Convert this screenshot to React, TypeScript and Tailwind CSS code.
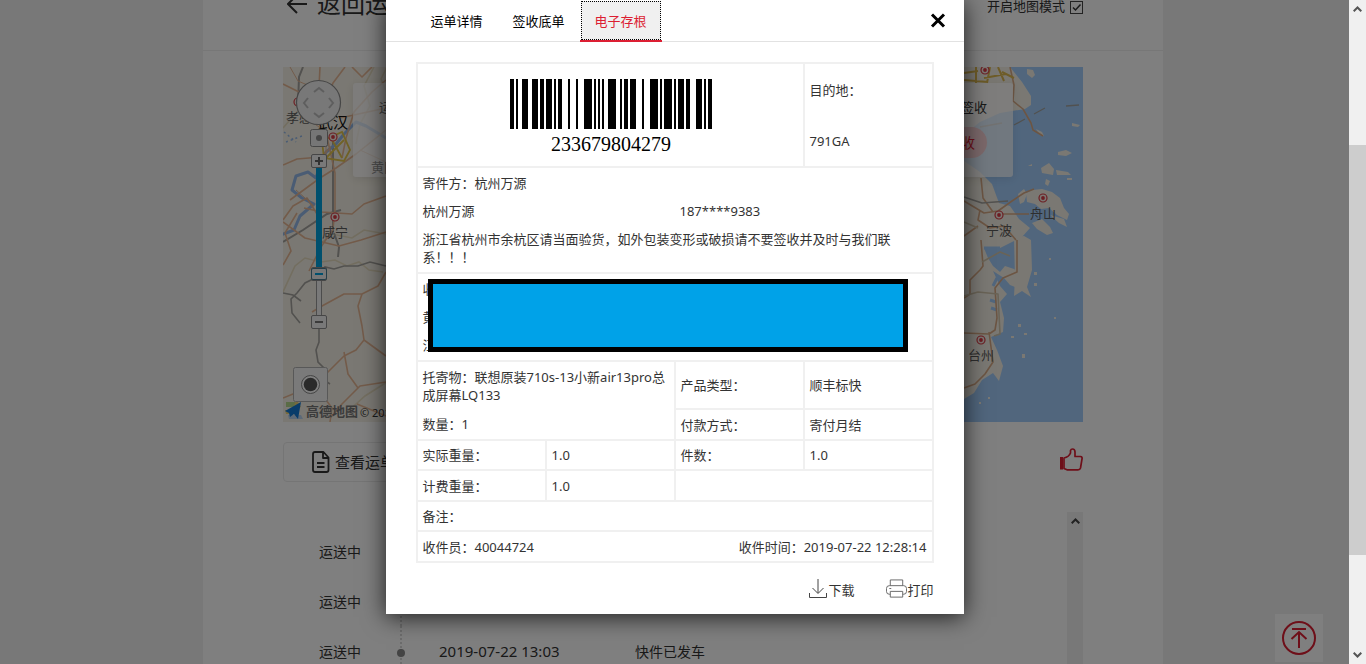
import React from "react";

const BARCODE =
  "211232" + "312131" + "112313" + "134111" + "111242" + "112133" + "134111" + "411131" + "2331112";

function Barcode() {
  const bars: { x: number; w: number }[] = [];
  let x = 0;
  BARCODE.split("").forEach((c, i) => {
    const w = Number(c);
    if (i % 2 === 0) bars.push({ x, w });
    x += w;
  });
  return (
    <svg width="202" height="50" viewBox="0 0 101 50" preserveAspectRatio="none" shapeRendering="crispEdges" aria-hidden="true">
      {bars.map((b) => (
        <rect key={b.x} x={b.x} y="0" width={b.w} height="50" fill="#000" />
      ))}
    </svg>
  );
}

function City({ x, y }: { x: number; y: number }) {
  return (
    <g>
      <circle cx={x} cy={y} r="4" fill="#f6ece4" stroke="#d83b45" strokeWidth="1.2" />
      <circle cx={x} cy={y} r="1.9" fill="#d83b45" />
    </g>
  );
}

function ZoomKey({ x, y, children }: { x: number; y: number; children?: React.ReactNode }) {
  return (
    <g>
      <rect x={x - 7.5} y={y - 6.5} width="15" height="13" rx="1.5" fill="#f2f2f2" stroke="#8c8c8c" />
      {children}
    </g>
  );
}

function RouteMap() {
  return (
    <svg className="block h-auto w-full" viewBox="283 67 800 355" role="img" aria-label="地图">
      <rect x="283" y="67" width="800" height="355" fill="#f5f1e6" />

      <g fill="none" stroke="#e6dcc0" strokeWidth="1.6">
        <path d="M283 128 l14 -16 12 -10 M356 144 l4 -20 10 -18 -6 -20 10 -19 M387 67 l-6 12 6 14 M283 292 l12 -26 10 -8 16 4 14 -2 12 6 12 -4 10 8 14 2 M322 242 l10 -8 20 4 12 -8 22 4 M345 414 l20 -18 22 -14" />
      </g>

      <g fill="none" stroke="#a4a29e" strokeWidth="2">
        <path d="M303 67 l-4 10 -1 28 M333 142 l0 90 M334 233 l5 14 -1 10 M283 242 l20 -12 24 -16 14 -4" />
        <path strokeWidth="1.6" d="M386 266 l-16 -4 -12 4 -14 0 -10 3 -9 -2 -8 10 -12 6 -8 10 -6 6 1 14 8 10 M283 293 l10 2 8 6 M319 328 l0 14 -3 8 2 12 8 8 -2 10 6 4" />
      </g>

      <g fill="none" stroke="#94b8e8" strokeWidth="3" strokeLinejoin="round">
        <path d="M386 138 l-20 -12 -10 -4 -12 12 -8 10 -10 8 -6 14 -4 12 -8 -6 -12 4 -4 14 10 8 12 6 -14 12 -6 14 -21 8" />
        <path strokeWidth="1.5" strokeDasharray="2 3" d="M284 132 l12 10 M286 142 l16 -6 M322 132 l10 6" />
      </g>

      <g fill="none" stroke="#e6b795" strokeWidth="1.6" strokeLinejoin="round">
        <path d="M283 84 l16 8 14 -8 14 10 M320 67 l-1 20 6 12 M352 67 l10 10 10 -10 M386 80 l-14 12 -18 20 -8 26 -4 20 M340 118 l46 -10 M283 165 l14 -6 24 -2 10 -10 M309 107 l18 30 8 36 0 36 -2 20 -12 18 -12 24" />
        <path d="M283 220 l10 -14 14 -8 10 16 0 16 M386 196 l-22 8 -12 10 -30 -2 -18 -4 M283 265 l8 -14 -6 -18 12 -20 M283 222 l22 16 34 8 22 -6 25 -8 M386 130 l-30 24 -20 14 -16 10 -30 22" />
        <path d="M386 272 l-8 14 -16 8 -18 0 -22 12 -10 6 M362 294 l-4 12 4 20 2 14 -8 10 -12 6 -18 18 M364 340 l22 16 M344 352 l4 22 10 14 M283 398 l10 -4 20 -6 14 -12 M386 382 l-26 4 -18 18 -12 14 M345 67 l-12 16 -6 16 M326 400 l6 8 -2 14 M357 404 l29 12" />
        <path strokeWidth="1" d="M312 122 l14 10 0 36 M296 190 l18 16 M360 150 l26 12 M290 67 l8 14 14 6" />
      </g>
      <path d="M322 141 l20 -9 8 18 -6 11 -20 -3 z M326 158 l18 -18 M330 136 l12 22" fill="none" stroke="#e2c44c" strokeWidth="1.8" />

      <path
        d="M1010 67 L1083 67 L1083 422 L964 422 L964 399 L974 393 L982 380 L993 373 L999 381 L1003 366 L997 350 L991 337 L1003 332 L1004 318 L1000 302 L1007 294 L1000 286 L993 271 L1004 278 L1010 285 L1015 287 L1020 274 L1014 269 L1005 266 L1000 272 L993 266 L988 258 L984 248 L1000 248 L1010 243 L1022 237 L1030 228 L1019 219 L1010 206 L999 203 L992 184 L980 172 L964 161 L964 135 L980 122 L1000 113 L1025 109 L1031 105 L1031 96 L1022 82 Z"
        fill="#a2cdfb"
      />
      <path d="M1014 238 L1024 236 L1031 240 L1032 270 L1027 287 L1031 297 L1022 291 L1014 296 L1015 278 Z" fill="#f5f1e6" />
      <g fill="#f5f1e6">
        <path d="M1026 193 l6 -3 10 -1 10 3 8 6 4 10 5 6 -2 6 -10 -5 -8 -7 -8 1 -6 -5 -8 -2 z" />
        <path d="M1018 194 l6 -5 3 5 -3 8 -4 2 z M1041 168 l8 -5 5 6 -1 6 -11 -2 z M1056 170 l12 2 3 3 -14 0 z M1058 152 l8 -2 6 3 -6 3 -8 -1 z M1027 69 l6 1 2 5 -3 3 -5 -4 z M1072 123 l8 2 -2 2 -6 -1 z" />
        <path d="M1032 223 l10 -4 8 8 3 6 -6 2 -10 -6 z M1050 215 l14 4 3 8 -8 -4 z M1046 179 l4 2 -2 5 -3 -2 z M1036 129 l6 3 2 4 -4 -1 z M1028 166 l4 -2 0 2 z M1067 178 l5 0 0 2 -5 0 z" />
        <path d="M1049 258 h2 v2 h-2 z M1034 272 h3 v3 h-3 z M1018 324 h3 v3 h-3 z M1024 333 h3 v2 h-3 z M1011 336 h3 v2 h-3 z M1022 354 h3 v4 h-3 z M1054 317 h2 v2 h-2 z M1034 283 h3 v3 h-3 z M988 397 h2 v2 h-2 z M979 402 h2 v2 h-2 z" />
      </g>
      <path d="M1014 125 l11 -6 M1034 114 l11 -6 M1066 106 l13 -1 M980 127 l22 -4" stroke="#a3a3a0" strokeWidth="1.3" fill="none" />
      <path d="M984 248 l16 0 M993 286 l4 -8 M990 300 l6 2 M991 308 l6 2" stroke="#a2cdfb" strokeWidth="3" />

      <g fill="none" stroke="#d9ab87" strokeWidth="1.6" strokeLinejoin="round">
        <path d="M964 298 l6 -4 0 -14 10 -10 3 -4 -2 -26 M1017 240 l0 32 -14 6 -8 10 2 30 -2 12 -6 4 -25 -1 M989 332 l4 30 -8 12 -10 10 -11 4" />
        <path d="M964 201 l20 12 14 -2 14 -10 12 -8 10 -4 M980 210 l-2 10 12 8 14 -2 12 14 M964 236 l14 -10 M1010 67 l4 18 -1 16 10 8 8 14 2 7 10 6 M981 178 l2 20 10 14 M999 214 l30 0" />
        <path stroke="#d3c6ad" d="M964 296 l14 -4 20 2 2 40 -6 2 M982 262 l18 -10 10 4 M964 222 l14 6" />
        <path stroke="#a4a29e" d="M964 197 l18 6 26 -2" />
      </g>
      <path d="M964 73 l14 -2 M964 80 l24 2 M990 67 l-3 16 M976 67 l0 16 M998 67 l6 14 M984 78 l22 -4 M1002 72 l12 6" stroke="#dcb851" strokeWidth="2" fill="none" />

      <City x={333} y={137} />
      <City x={298} y={102} />
      <City x={335} y={217} />
      <City x={985} y={70} />
      <City x={1043} y={198} />
      <City x={999} y={215} />
      <City x={981} y={340} />

      <g fontFamily='"Noto Sans CJK SC", sans-serif' fontSize="13" fill="#5c5c5c" textAnchor="middle">
        <text x="299" y="122">孝感</text>
        <text x="333" y="128" fontSize="15" fill="#111">武汉</text>
        <text x="335" y="237">咸宁</text>
        <text x="1043" y="218">舟山</text>
        <text x="999" y="235">宁波</text>
        <text x="981" y="360">台州</text>
      </g>

      <circle cx="318.500" cy="102.500" r="22" fill="#f0f0f0" stroke="#8c8c8c" strokeWidth="1.2" />
      <path d="M314 92 l5 -4 5 4 M314 113 l5 4 5 -4 M308 98 l-4 5 4 5 M329 98 l4 5 -4 5" fill="none" stroke="#bdbdbd" strokeWidth="2" />
      <rect x="310.500" y="129.500" width="17" height="17" rx="2" fill="#ececec" stroke="#8c8c8c" />
      <circle cx="319" cy="138" r="3" fill="#8c8c8c" />
      <rect x="316" y="167" width="6" height="102" fill="#00a0dc" />
      <rect x="316.500" y="280" width="5" height="36" fill="#f2f2f2" stroke="#999" />
      <ZoomKey x={319} y={161}>
        <path d="M315 161 h8 M319 157 v8" stroke="#666" strokeWidth="2" />
      </ZoomKey>
      <ZoomKey x={319} y={274}>
        <rect x="311.500" y="268.500" width="15" height="11" rx="1.500" fill="#eee" stroke="#4a7d90" />
        <path d="M315 274 h8" stroke="#00a0dc" strokeWidth="2" />
      </ZoomKey>
      <ZoomKey x={319} y={322}>
        <path d="M315 322 h8" stroke="#777" strokeWidth="2" />
      </ZoomKey>
      <rect x="293.500" y="367.500" width="34" height="34" rx="2" fill="#f4f4f4" stroke="#b0b0b0" />
      <circle cx="310.500" cy="384.500" r="9" fill="#fff" stroke="#888" />
      <circle cx="310.500" cy="384.500" r="6.800" fill="#555" />

      <path d="M286 402 h9 v5 h-9 z" fill="#b5d98c" />
      <path d="M295 402 h3 l3 5 -8 4 z M285 410 h5 v4 h-4 z" fill="#ead27a" />
      <path d="M288 415 h13 l2 4 h-14 z" fill="#b9d2ee" />
      <path d="M285 411 l16 -9 -3 17 -4 -5 -4 3 -1 -4 z" fill="#1278d4" />
      <g fontFamily='"Noto Sans CJK SC", sans-serif' fill="#333">
        <text x="306" y="416" fontSize="13" fontWeight="bold" fill="#777">高德地图</text>
        <text x="360" y="417" fontSize="11" fontFamily='"Noto Sans", sans-serif'>© 2019</text>
      </g>
    </svg>
  );
}

const td = "border-2 border-[#f0f0f0] px-[5px] align-middle";

function Waybill() {
  return (
    <table className="w-full table-fixed border-collapse text-[13px] leading-[18px] text-[#333]">
      <tbody>
        <tr className="h-[104px]">
          <td colSpan={3} className={td}>
            <div className="flex flex-col items-center pt-1 pl-0.5">
              <Barcode />
              <span className="pt-1 font-['Liberation_Serif',serif] text-[20px] leading-[22px] text-black">233679804279</span>
            </div>
          </td>
          <td className={td}>
            <p>目的地：</p>
            <p className="mt-[33px]">791GA</p>
          </td>
        </tr>
        <tr className="h-[106px]">
          <td colSpan={4} className={td}>
            <div className="flex flex-col gap-2.5">
              <p>寄件方：杭州万源</p>
              <div className="grid grid-cols-2">
                <span>杭州万源</span>
                <span className="pl-[5px]">187****9383</span>
              </div>
              <p className="pr-8">浙江省杭州市余杭区请当面验货，如外包装变形或破损请不要签收并及时与我们联系！！！</p>
            </div>
          </td>
        </tr>
        <tr className="h-[88px]">
          <td colSpan={4} className={td}>
            <div className="relative flex flex-col gap-2.5">
              <p>收件方：</p>
              <p>黄</p>
              <p>江西省</p>
              <div className="absolute -top-px right-[19px] left-[5px] h-[73px] border-[5px] border-black bg-[#00a2e8]" />
            </div>
          </td>
        </tr>
        <tr className="h-12">
          <td colSpan={2} rowSpan={2} className={td}>
            <div className="flex flex-col gap-[11px] pb-px">
              <p>托寄物：联想原装710s-13小新air13pro总成屏幕LQ133</p>
              <p>数量：1</p>
            </div>
          </td>
          <td className={td}>产品类型：</td>
          <td className={td}>顺丰标快</td>
        </tr>
        <tr className="h-[31px]">
          <td className={td}>付款方式：</td>
          <td className={td}>寄付月结</td>
        </tr>
        <tr className="h-[30px]">
          <td className={td}>实际重量：</td>
          <td className={td}>1.0</td>
          <td className={td}>件数：</td>
          <td className={td}>1.0</td>
        </tr>
        <tr className="h-[31px]">
          <td className={td}>计费重量：</td>
          <td className={td}>1.0</td>
          <td colSpan={2} className={td} />
        </tr>
        <tr className="h-[30px]">
          <td colSpan={4} className={td}>备注：</td>
        </tr>
        <tr className="h-[31px]">
          <td colSpan={4} className={td}>
            <div className="flex justify-between">
              <span>收件员：40044724</span>
              <span>收件时间：2019-07-22 12:28:14</span>
            </div>
          </td>
        </tr>
      </tbody>
    </table>
  );
}

function Dialog() {
  return (
    <div role="dialog" aria-label="电子存根" className="w-[578px] bg-white shadow-[0_3px_22px_rgba(0,0,0,0.75)]">
      <div className="flex h-[42px] items-stretch border-b border-[#e2e2e2] pr-[18px] pl-[30px] text-[13px] text-black">
        <button type="button" className="-mb-px w-[82px] pt-0.5">运单详情</button>
        <button type="button" className="-mb-px w-[82px] pt-0.5">签收底单</button>
        <button type="button" className="-mb-px w-[82px] border-b-2 border-[#dc1e32] px-px pt-px text-[#dc1e32]">
          <span className="flex h-[39px] items-center justify-center border border-dotted border-black bg-[#f0f0f0] pt-0.5">电子存根</span>
        </button>
        <button type="button" aria-label="关闭" className="ml-auto">
          <svg width="16" height="16" viewBox="0 0 16 16" aria-hidden="true">
            <path d="M2 1.500 L14 13.500 M14 1.500 L2 13.500" stroke="#000" strokeWidth="3" />
          </svg>
        </button>
      </div>
      <div className="px-[30px] pt-5">
        <Waybill />
        <div className="flex h-[51px] items-center justify-end gap-8 text-[13px] text-[#333]">
          <button type="button" className="flex items-end">
            <svg className="mr-px" width="18" height="20" viewBox="0 0 18 20" fill="none" stroke="#444" aria-hidden="true">
              <path d="M9 0 V14 M3.500 9 L9 14.500 L14.500 9 M0.500 14 V18.500 H17.500 V14" />
            </svg>
            <span className="leading-[18px]">下载</span>
          </button>
          <button type="button" className="flex items-end">
            <svg width="21" height="20" viewBox="0 0 22 20" fill="none" stroke="#666" aria-hidden="true">
              <path d="M4.500 6.500 V0.500 H17.500 V6.500 M4.500 15.500 H3.500 Q0.500 15.500 0.500 12.500 V9.500 Q0.500 6.500 3.500 6.500 H18.500 Q21.500 6.500 21.500 9.500 V12.500 Q21.500 15.500 18.500 15.500 H17.500 M4.500 12.500 H17.500 V18.500 H4.500 Z M3.500 9.500 H5.500" />
            </svg>
            <span className="leading-[18px]">打印</span>
          </button>
        </div>
      </div>
    </div>
  );
}

function TimelineRow({ time, text }: { time?: string; text?: string }) {
  return (
    <li className="flex h-[50px] items-center">
      <span className="w-[81px]">运送中</span>
      <span className="flex h-full w-[39px] items-center border-l-2 border-dotted border-[#d8d8d8]">
        {time && <span className="mt-1 -ml-[5px] size-2 rounded-full bg-[#888]" />}
      </span>
      <span className="w-[196px] text-[15px]">{time}</span>
      <span>{text}</span>
    </li>
  );
}

export default function App() {
  return (
    <div className="relative h-screen overflow-hidden bg-[#f0f0f0] font-['Noto_Sans','Noto_Sans_CJK_SC',sans-serif] text-[#333]">
      <main className="mx-auto flex h-full w-full max-w-[960px] flex-col bg-white">
        <header className="-mt-[42px] flex h-[93px] shrink-0 items-center justify-between border-b border-[#eee] px-20">
          <a href="#back" className="flex items-center gap-2.5 text-[24px] leading-8">
            <svg className="ml-1" width="20" height="20" viewBox="0 0 20 20" fill="none" stroke="#333" strokeWidth="2" aria-hidden="true">
              <path d="M20 10 H1 M10 1 L1 10 L10 19" />
            </svg>
            返回运单
          </a>
          <label className="flex items-center gap-[5px] pt-1.5 text-[13px]">
            开启地图模式
            <span className="relative flex">
              <input type="checkbox" defaultChecked className="size-[13px] appearance-none border border-[#444] bg-white" />
              <svg className="pointer-events-none absolute inset-0" width="13" height="13" viewBox="0 0 13 13" fill="none" stroke="#333" strokeWidth="1.500" aria-hidden="true">
                <path d="M3 6.500 L5.500 9 L10.500 3.500" />
              </svg>
            </span>
          </label>
        </header>

        <div className="flex flex-1 flex-col overflow-hidden px-20 pt-4">
          <section className="relative shrink-0">
            <RouteMap />
            <div className="absolute top-4 right-[70px] left-[70px] flex h-[94px] justify-between rounded-[3px] bg-white/70 px-[26px] pt-4 text-[13px] shadow-[0_2px_10px_rgba(0,0,0,0.1)]">
              <div className="flex flex-col">
                <span className="leading-4 text-[#777]">运单号</span>
                <span className="-ml-2 mt-11 leading-4 text-[#999]">黄冈</span>
              </div>
              <div className="flex flex-col items-end gap-3">
                <span className="leading-4">已签收</span>
                <span className="rounded-full bg-[#f7d0d4] px-3 text-[14px] leading-[31px] text-[#dc1e32]">已签收</span>
              </div>
            </div>
          </section>

          <div className="mt-5 flex h-10 shrink-0 items-center justify-between">
            <button type="button" className="flex h-10 items-center gap-[5px] rounded-sm border border-[#eaeaea] px-7 text-[15px]">
              <svg width="18" height="22" viewBox="0 0 18 22" fill="none" stroke="#333" strokeWidth="1.800" strokeLinejoin="round" aria-hidden="true">
                <path d="M3 1 H11.500 L16.500 6.500 V19 Q16.500 21 14.500 21 H3 Q1 21 1 19 V3 Q1 1 3 1 Z M11 1.500 V7 H16 M5 12 H12.500 M5 16 H12.500" />
              </svg>
              查看运单
            </button>
            <button type="button" aria-label="点赞" className="-mt-1.5">
              <svg width="24" height="23" viewBox="0 0 24 23" fill="none" stroke="#dc1e32" strokeWidth="1.700" strokeLinejoin="round" aria-hidden="true">
                <path d="M5 10 Q10 9 11.500 5 V2.500 Q12 1 13.500 1 Q16 1 16 4 V8.500 H21.500 Q23.500 8.700 23 11 L21.500 20 Q21 21.800 19 21.800 H8 L5 20.500 Z" />
                <path d="M2.500 9 V21.500" strokeWidth="3" />
              </svg>
            </button>
          </div>

          <div className="mt-[30px] flex flex-1 overflow-hidden">
            <ul className="flex-1 pt-3.5 pl-9 text-[14px]">
              <TimelineRow />
              <TimelineRow />
              <TimelineRow time="2019-07-22 13:03" text="快件已发车" />
            </ul>
            <div className="flex w-4 justify-center bg-[#f0f0f0] pt-1.5">
              <svg width="9" height="6" viewBox="0 0 9 6" fill="none" stroke="#444" strokeWidth="2" aria-hidden="true">
                <path d="M0.700 5.300 L4.500 1.500 L8.300 5.300" />
              </svg>
            </div>
          </div>
        </div>
      </main>

      <button type="button" aria-label="返回顶部" className="absolute right-[43px] bottom-0.5 flex size-12 items-center justify-center bg-white">
        <svg width="36" height="36" viewBox="0 0 36 36" fill="none" stroke="#dc1e32" strokeWidth="2" aria-hidden="true">
          <circle cx="18" cy="18" r="16" />
          <path d="M11 9 H25 M18 28 V12.500 M10.500 19 L18 12 L25.500 19" />
        </svg>
      </button>

      <div className="absolute inset-y-0 right-[17px] left-0 flex items-start justify-center bg-black/50">
        <Dialog />
      </div>

      <div className="absolute inset-y-0 right-0 flex w-[17px] flex-col items-center justify-between bg-[#f0f0f0] py-1.5">
        <svg width="9" height="6" viewBox="0 0 9 6" fill="none" stroke="#555" strokeWidth="2" aria-hidden="true">
          <path d="M0.700 5.300 L4.500 1.500 L8.300 5.300" />
        </svg>
        <div className="absolute inset-x-0 top-[145px] h-[410px] bg-[#cdcdcd]" />
        <svg width="9" height="6" viewBox="0 0 9 6" fill="none" stroke="#555" strokeWidth="2" aria-hidden="true">
          <path d="M0.700 0.700 L4.500 4.500 L8.300 0.700" />
        </svg>
      </div>
    </div>
  );
}
